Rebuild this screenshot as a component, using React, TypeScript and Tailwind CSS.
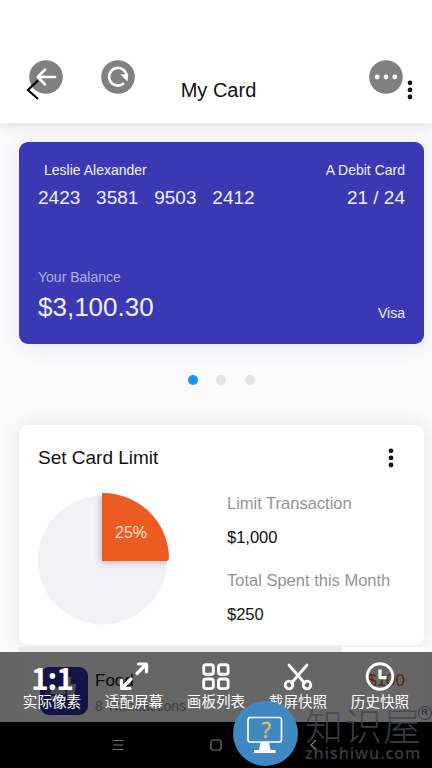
import type { ReactNode } from "react"

function MoreDots() {
    return (
        <svg className="w-[6px] h-[20px]" viewBox="0 0 6 20" fill="#111">
            <circle cx="3" cy="2.8" r="2.4" />
            <circle cx="3" cy="9.9" r="2.4" />
            <circle cx="3" cy="17" r="2.4" />
        </svg>
    )
}

function RoundButton({ children }: { children: ReactNode }) {
    return (
        <svg className="w-[34px] h-[34px]" viewBox="0 0 34 34" fill="none">
            <circle cx="17" cy="17" r="16.8" fill="#808080" />
            {children}
        </svg>
    )
}

function Header() {
    return (
        <header className="relative h-[123px] shrink-0 bg-white shadow-[0_2px_14px_rgba(0,0,0,0.12)] pt-[78px] px-[26px]">
            <div className="flex items-center justify-between h-[24px] text-[20px] text-[#111] pr-[-4px]">
                <span className="w-[14px]" />
                <h1 className="pl-[5px]">My Card</h1>
                <span className="w-[14px]" />
            </div>
            <div className="absolute left-[29px] top-[60px]">
                <RoundButton>
                    <path d="M26 17H9.5M16 9.6L8.8 17l7.2 7.4" stroke="#fff" strokeWidth="2.7" strokeLinecap="round" strokeLinejoin="round" />
                </RoundButton>
            </div>
            <div className="absolute left-[101px] top-[60px]">
                <RoundButton>
                    <path d="M22.2 23.8A8.8 8.8 0 1 1 25.7 16" stroke="#fff" strokeWidth="2.6" strokeLinecap="round" />
                    <path d="M19.3 14.2L27.2 14.6 26.5 21.4z" fill="#fff" />
                </RoundButton>
            </div>
            <div className="absolute left-[369px] top-[60px]">
                <RoundButton>
                    <circle cx="8.2" cy="17" r="2.4" fill="#fff" />
                    <circle cx="17" cy="17" r="2.4" fill="#fff" />
                    <circle cx="25.7" cy="17" r="2.4" fill="#fff" />
                </RoundButton>
            </div>
            <svg className="absolute left-[26px] top-[79px] w-[14px] h-[22px]" viewBox="0 0 14 22" fill="none" stroke="#000" strokeWidth="2.2">
                <path d="M12 1.4L2 11l10 9" />
            </svg>
            <div className="absolute left-[407px] top-[80px] flex">
                <MoreDots />
            </div>
        </header>
    )
}

function DebitCard() {
    return (
        <section className="mt-[19px] ml-[19px] w-[405px] h-[202px] shrink-0 rounded-[9px] bg-[#3a39b3] text-[#f0f0ff] px-[19px] shadow-[0_2px_22px_rgba(58,57,179,0.1)]">
            <div className="flex justify-between pt-[18px] pl-[6px] text-[14px] leading-[20px]">
                <span>Leslie Alexander</span>
                <span>A Debit Card</span>
            </div>
            <div className="flex justify-between mt-[6px] text-[19px] leading-[24px]">
                <span className="whitespace-pre">2423   3581   9503   2412</span>
                <span>21 / 24</span>
            </div>
            <p className="mt-[57px] text-[14px] leading-[20px] text-[#b0b0ea]">Your Balance</p>
            <div className="flex justify-between mt-[4px]">
                <span className="text-[26px] leading-[32px]">$3,100.30</span>
                <span className="mt-[12px] text-[14px] leading-[20px]">Visa</span>
            </div>
        </section>
    )
}

function Pager() {
    return (
        <div className="flex justify-center gap-[18.5px] mt-[31px] pl-[10px] h-[10px] shrink-0">
            <span className="w-[10px] h-[10px] rounded-full bg-[#1798ee]" />
            <span className="w-[10px] h-[10px] rounded-full bg-[#e4e4e5]" />
            <span className="w-[10px] h-[10px] rounded-full bg-[#e4e4e5]" />
        </div>
    )
}

function LimitChart() {
    return (
        <svg className="w-[140px] h-[140px] -mt-px" viewBox="0 0 140 140">
            <defs>
                <filter id="sliceShadow" x="-20%" y="-20%" width="140%" height="140%">
                    <feDropShadow dx="-1" dy="1.5" stdDeviation="3" floodColor="#555" floodOpacity="0.35" />
                </filter>
                <clipPath id="disc">
                    <circle cx="64.5" cy="70" r="64.5" />
                </clipPath>
            </defs>
            <circle cx="64.5" cy="70" r="64.5" fill="#f1f1f6" />
            <g clipPath="url(#disc)">
                <path d="M64 3V71H131A67 68 0 0 0 64 3z" fill="#ec5b22" filter="url(#sliceShadow)" />
            </g>
            <path d="M64 3.5Q64 3 64.5 3A66 66 0 0 1 131 67.5Q131 71 127.5 71H67.5Q64 71 64 67.5z" fill="#ec5b22" />
            <text x="93" y="48" fontSize="16" textAnchor="middle" fill="#ffe0cc">25%</text>
        </svg>
    )
}

function LimitCard() {
    return (
        <section className="relative mt-[40px] ml-[19px] w-[405px] h-[220px] shrink-0 rounded-[9px] bg-white shadow-[0_0_22px_rgba(0,0,0,0.1)] px-[19px] pt-[21px]">
            <div className="flex justify-between items-center h-[24px] pr-[11px]">
                <h2 className="text-[19px] text-[#111]">Set Card Limit</h2>
                <MoreDots />
            </div>
            <div className="flex pt-[21px]">
                <LimitChart />
                <div className="ml-[49px] text-[16.5px] leading-[20px] text-[#111] pt-[2px]">
                    <p className="text-[#949494]">Limit Transaction</p>
                    <p className="mt-[14px]">$1,000</p>
                    <p className="mt-[23px] text-[#949494]">Total Spent this Month</p>
                    <p className="mt-[14px]">$250</p>
                </div>
            </div>
        </section>
    )
}

function FoodRow() {
    return (
        <section className="ml-[19px] mt-[2px] w-[405px] h-[120px] shrink-0 bg-white border-t-[5px] border-[#e9e9e9] relative">
            <span className="absolute right-0 -top-[5px] w-[82px] h-[5px] bg-white" />
            <div className="flex pt-[15px] pl-[21px] pr-[19px]">
                <svg className="w-[48px] h-[48px]" viewBox="0 0 48 48">
                    <rect width="48" height="48" rx="9" fill="#3230b0" />
                    <g fill="#b9b9d8">
                        <path d="M28 10h3v7h5l-2 16h-7z" />
                        <path d="M10 27q1-7 8-7t8 7zM10 29h16v4H10z" />
                    </g>
                </svg>
                <div className="ml-[7px] leading-[20px]">
                    <p className="text-[17px] text-[#111] mt-[4px]">Food</p>
                    <p className="text-[14px] text-[#a0a0a0] mt-[5px]">8 Transactions</p>
                </div>
                <p className="ml-auto mt-[4px] text-[17px] leading-[20px] text-[#ec5b22]">$100</p>
            </div>
        </section>
    )
}

function Tool({ label, children }: { label: string; children: ReactNode }) {
    return (
        <div className="flex flex-col items-center w-[82px]">
            {children}
            <span className="text-[14.6px] leading-[18px] mt-[2px] whitespace-nowrap">{label}</span>
        </div>
    )
}

function Toolbar() {
    return (
        <div className="absolute left-0 top-[652px] w-[432px] h-[70px] bg-black/60 text-white flex pt-[9px] pl-[11px]">
            <div className="flex flex-col items-center w-[82px] -mt-[2px]">
                <span className="h-[32px] leading-[37px] text-[30px] font-bold tracking-[-1px] font-['Noto_Sans_CJK_SC']">1:1</span>
                <span className="text-[14.6px] leading-[18px] mt-[2px] whitespace-nowrap">实际像素</span>
            </div>
            <Tool label="适配屏幕">
                <svg className="w-[30px] h-[30px]" viewBox="0 0 30 30" fill="none" stroke="#fff" strokeWidth="3.2" strokeLinecap="round" strokeLinejoin="round">
                    <path d="M19.5 3H27.5V11M27 3.5L18 12.5M2.5 19V27.5H11M3 27L12 18" />
                </svg>
            </Tool>
            <Tool label="画板列表">
                <svg className="w-[30px] h-[30px]" viewBox="0 0 30 30" fill="none" stroke="#fff" strokeWidth="2.9">
                    <rect x="2.7" y="3.7" width="9.6" height="9.6" rx="2.3" />
                    <rect x="17.5" y="3.7" width="9.6" height="9.6" rx="2.3" />
                    <rect x="2.7" y="18" width="9.6" height="9.6" rx="2.3" />
                    <rect x="17.5" y="18" width="9.6" height="9.6" rx="2.3" />
                </svg>
            </Tool>
            <Tool label="截屏快照">
                <svg className="w-[30px] h-[30px]" viewBox="0 0 30 30" fill="none" stroke="#fff" strokeWidth="2.8" strokeLinecap="round">
                    <path d="M6 4L21.5 22M24 4L8.5 22" />
                    <circle cx="6" cy="24" r="3.8" />
                    <circle cx="24" cy="24" r="3.8" />
                </svg>
            </Tool>
            <Tool label="历史快照">
                <svg className="w-[30px] h-[30px]" viewBox="0 0 30 30" fill="none" stroke="#fff" strokeWidth="2.9">
                    <circle cx="15" cy="15.5" r="12.8" />
                    <path d="M15 8.5V16.6H21.5" strokeWidth="3.2" strokeLinejoin="round" />
                </svg>
            </Tool>
        </div>
    )
}

function NavBar() {
    return (
        <nav className="absolute left-0 top-[722px] w-[432px] h-[46px] bg-black flex items-center justify-center gap-[86px] pl-0">
            <svg className="w-[12px] h-[12px]" viewBox="0 0 12 12" stroke="#777" strokeWidth="1.2">
                <path d="M1 1.5H11M1 6H11M1 10.5H11" />
            </svg>
            <svg className="w-[12px] h-[12px]" viewBox="0 0 12 12" fill="none" stroke="#777" strokeWidth="1.2">
                <rect x="1" y="1" width="10" height="10" rx="2" />
            </svg>
            <svg className="w-[12px] h-[12px]" viewBox="0 0 12 12" fill="none" stroke="#777" strokeWidth="1.3">
                <path d="M8 1L3 6l5 5" />
            </svg>
        </nav>
    )
}

function Watermark() {
    return (
        <div className="absolute left-[233px] top-[700px] w-[199px] h-[68px] flex overflow-hidden">
            <svg className="w-[66px] h-[68px] shrink-0" viewBox="0 0 66 68" fill="none">
                <circle cx="32.5" cy="33.5" r="32.5" fill="#3f88c2" />
                <rect x="15" y="17.5" width="33.5" height="24.5" rx="2.5" stroke="#fff" strokeWidth="1.7" />
                <path d="M27.5 42H36L37.5 50H42.5V53H21V50H26z" fill="#fff" />
                <text x="33.2" y="37.5" fontSize="21" textAnchor="middle" fill="#f2bd45" stroke="#f2bd45" strokeWidth="0.4" fontFamily="Open Sans">?</text>
            </svg>
            <div className="ml-[6px] text-[#43484e]/85">
                <p className="text-[38px] leading-[40px] mt-[4px] tracking-[1px] whitespace-nowrap font-['Noto_Sans_CJK_SC'] font-light">知识屋</p>
                <p className="font-['Open_Sans'] font-semibold text-[16px] leading-[18px] tracking-[0.9px]">zhishiwu.com</p>
            </div>
            <span className="absolute left-[184.5px] top-[6px] w-[14px] h-[14px] rounded-full border-[1.3px] border-[#353a3e] text-[#353a3e] text-[9px] leading-[11px] font-bold text-center">R</span>
        </div>
    )
}

function App() {
    return (
        <main className="relative flex flex-col w-[432px] h-[768px] overflow-hidden bg-[#fbfbfc] font-['Liberation_Sans','Noto_Sans_CJK_SC',sans-serif]">
            <Header />
            <DebitCard />
            <Pager />
            <LimitCard />
            <FoodRow />
            <Toolbar />
            <NavBar />
            <Watermark />
        </main>
    )
}

export default App
